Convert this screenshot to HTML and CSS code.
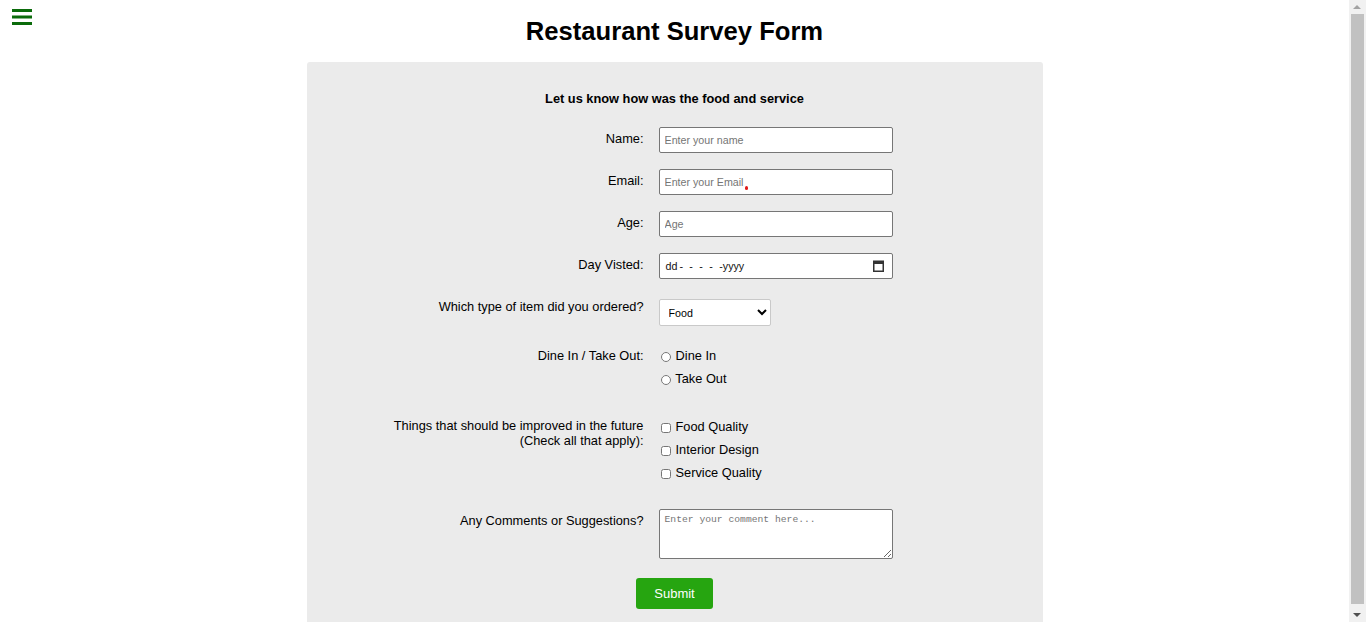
FILE: index.html
```html
<!DOCTYPE html>
<html lang="en">
<head>
<meta charset="utf-8">
<title>Restaurant Survey Form</title>
<link rel="stylesheet" href="styles.css">
</head>
<body>
<nav class="menu-btn" aria-label="Menu">
  <svg width="20" height="17" viewBox="0 0 20 17"><rect x="0" y="0" width="20" height="3" fill="#0b6b0b"/><rect x="0" y="6.5" width="20" height="3" fill="#0b6b0b"/><rect x="0" y="13" width="20" height="3" fill="#0b6b0b"/></svg>
</nav>
<div class="page">
<h1 class="title">Restaurant Survey Form</h1>
<form class="card">
  <p class="subtitle">Let us know how was the food and service</p>

  <div class="row row-input">
    <label class="lbl lbl-input" for="name">Name:</label>
    <input class="field" id="name" type="text" placeholder="Enter your name">
  </div>
  <div class="row row-input">
    <label class="lbl lbl-input" for="email">Email:</label>
    <div class="field-wrap">
      <input class="field" id="email" type="email" placeholder="Enter your Email">
      <span class="red-dot"></span>
    </div>
  </div>
  <div class="row row-input">
    <label class="lbl lbl-input" for="age">Age:</label>
    <input class="field" id="age" type="text" placeholder="Age">
  </div>
  <div class="row row-date">
    <label class="lbl lbl-input" for="day">Day Visted:</label>
    <div class="field date-field" id="day">
      <span class="date-text">dd<span class="dashes">----</span>-yyyy</span>
      <svg class="cal" width="11" height="12" viewBox="0 0 11 12"><rect x="0.75" y="1.25" width="9.5" height="10" fill="none" stroke="#333" stroke-width="1.5"/><rect x="0" y="1" width="11" height="3" fill="#333"/></svg>
    </div>
  </div>
  <div class="row row-select">
    <label class="lbl" for="item">Which type of item did you ordered?</label>
    <select class="select" id="item">
      <option>Food</option>
      <option>Drinks</option>
      <option>Both</option>
    </select>
  </div>
  <div class="row row-radio">
    <span class="lbl lbl-opt">Dine In / Take Out:</span>
    <div class="opts">
      <label class="opt"><input type="radio" name="dine" class="radio"> Dine In</label>
      <label class="opt"><input type="radio" name="dine" class="radio"> Take Out</label>
    </div>
  </div>
  <div class="row row-check">
    <span class="lbl lbl-check">Things that should be improved in the future<br>(Check all that apply):</span>
    <div class="opts">
      <label class="opt"><input type="checkbox" class="check"> Food Quality</label>
      <label class="opt"><input type="checkbox" class="check"> Interior Design</label>
      <label class="opt"><input type="checkbox" class="check"> Service Quality</label>
    </div>
  </div>
  <div class="row row-text">
    <label class="lbl lbl-text" for="comment">Any Comments or Suggestions?</label>
    <textarea class="area" id="comment" placeholder="Enter your comment here..."></textarea>
  </div>
  <div class="actions">
    <button type="submit" class="submit">Submit</button>
  </div>
</form>
</div>
<div class="scrollbar" aria-hidden="true">
  <span class="sb-up"></span>
  <span class="sb-thumb"></span>
  <span class="sb-down"></span>
</div>
</body>
</html>
```
FILE: styles.css
```css
html, body {
  margin: 0;
  padding: 0;
  background: #ffffff;
}
body {
  font-family: "Liberation Sans", Arial, sans-serif;
  color: #000;
}
.page {
  margin-right: 17px;
}
.menu-btn {
  position: absolute;
  left: 12px;
  top: 9px;
  width: 20px;
  height: 17px;
}
.menu-btn svg { display: block; }
.title {
  margin: 17px 0 15.5px;
  font-size: 25.6px;
  line-height: 29.5px;
  font-weight: bold;
  text-align: center;
}
.card {
  width: 736px;
  margin: 0 auto;
  box-sizing: border-box;
  background: #ebebeb;
  border-radius: 3px 3px 0 0;
  padding: 29px 0 22px;
}
.subtitle {
  margin: 0 0 21px;
  font-size: 12.8px;
  line-height: 15px;
  font-weight: bold;
  text-align: center;
}
.row {
  display: grid;
  grid-template-columns: 337px 234px;
  column-gap: 15px;
  align-items: start;
}
.row-input { margin-bottom: 16px; }
.row-date { margin-bottom: 20px; }
.row-select { margin-bottom: 18px; }
.row-radio { margin-bottom: 25px; }
.row-check { margin-bottom: 25px; }
.row-text { margin-bottom: 19px; }
.lbl {
  text-align: right;
  font-size: 12.8px;
  line-height: 15px;
}
.lbl-input { padding-top: 4px; }
.lbl-opt { line-height: 23px; }
.lbl-check { padding-top: 4px; line-height: 14.5px; }
.lbl-text { padding-top: 3.5px; }
.field-wrap { position: relative; }
.field {
  display: block;
  box-sizing: border-box;
  width: 234px;
  height: 26px;
  margin: 0;
  padding: 0 5px;
  border: 1px solid #767676;
  border-radius: 2px;
  background: #fff;
  font-family: "Liberation Sans", Arial, sans-serif;
  font-size: 10.7px;
  color: #000;
}
.field::placeholder { color: #757575; }
.red-dot {
  position: absolute;
  left: 86px;
  top: 17px;
  width: 3.5px;
  height: 3.5px;
  border-radius: 50%;
  background: #e01b1b;
}
.date-field {
  display: flex;
  align-items: center;
  justify-content: space-between;
  padding: 0 8px 0 6px;
}
.date-text {
  font-size: 10.7px;
  color: #111;
}
.dashes {
  letter-spacing: 6.4px;
  margin-left: 2px;
}
.cal { display: block; margin-top: -1px; }
.select {
  box-sizing: border-box;
  width: 112px;
  height: 27px;
  margin: 0;
  padding: 0 4px 0 5px;
  border: 1px solid #c9c9c9;
  border-radius: 2px;
  background: #fff;
  font-family: "Liberation Sans", Arial, sans-serif;
  font-size: 10.7px;
  color: #000;
}
.opts {
  display: flex;
  flex-direction: column;
}
.opt {
  display: flex;
  align-items: center;
  font-size: 12.8px;
  line-height: 23px;
  white-space: pre;
}
.radio, .check {
  width: 10px;
  height: 10px;
  margin: 3px 1.5px 0 2px;
  flex: none;
}
.area {
  display: block;
  box-sizing: border-box;
  width: 234px;
  height: 50px;
  margin: 0;
  padding: 4px 5px 2px;
  border: 1px solid #767676;
  border-radius: 2px;
  background: #fff;
  font-family: "Liberation Mono", "Courier New", monospace;
  font-size: 9.7px;
  resize: both;
}
.area::placeholder { color: #757575; }
.actions {
  display: flex;
  justify-content: center;
}
.submit {
  box-sizing: border-box;
  width: 77px;
  height: 31px;
  margin: 0;
  padding: 0;
  border: none;
  border-radius: 3px;
  background: #26a510;
  color: #fff;
  font-family: "Liberation Sans", Arial, sans-serif;
  font-size: 13px;
  cursor: pointer;
}
.scrollbar {
  position: fixed;
  top: 0;
  right: 0;
  width: 17px;
  height: 100vh;
  background: #f1f1f1;
}
.sb-up, .sb-down {
  position: absolute;
  left: 4px;
  width: 0;
  height: 0;
  border-left: 4.5px solid transparent;
  border-right: 4.5px solid transparent;
}
.sb-up {
  top: 5px;
  border-bottom: 4px solid #a3a3a3;
}
.sb-down {
  bottom: 5px;
  border-top: 4px solid #505050;
}
.sb-thumb {
  position: absolute;
  top: 14px;
  bottom: 18px;
  left: 2px;
  right: 2px;
  background: #c1c1c1;
}
```
